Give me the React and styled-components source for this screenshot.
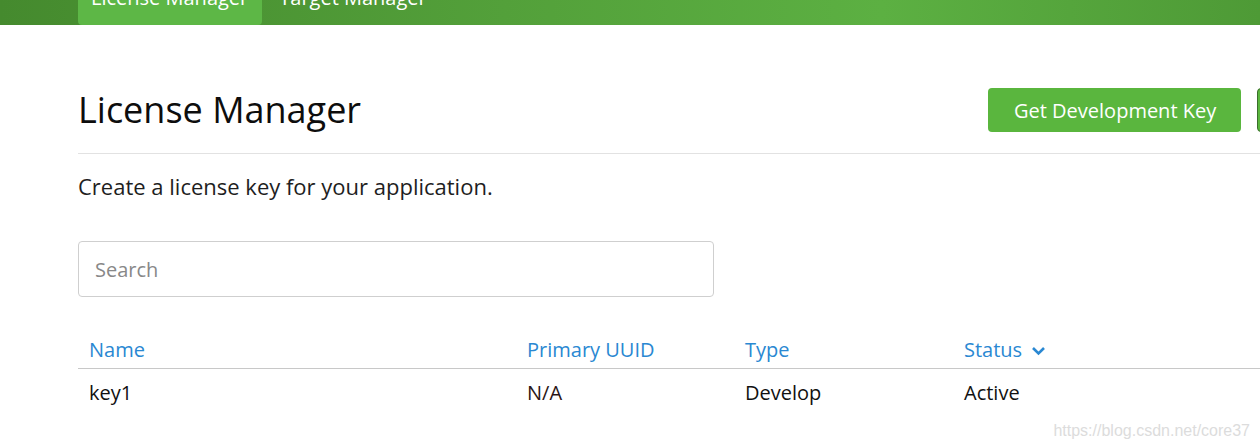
import React from "react";
import styled, { createGlobalStyle } from "styled-components";

const GlobalStyle = createGlobalStyle`
  html, body {
    margin: 0;
    padding: 0;
    background: #ffffff;
    overflow: hidden;
  }
  body {
    font-family: "Open Sans", "Noto Sans", sans-serif;
    color: #1a1a1a;
  }
`;

const Page = styled.div`
  position: relative;
  width: 1260px;
  height: 448px;
  overflow: hidden;
`;

const NavBar = styled.nav`
  display: flex;
  gap: 4px;
  height: 52px;
  margin-top: -27px;
  padding-left: 78px;
  background: linear-gradient(to right, #458a2e 0%, #53a03a 40%, #5cb042 70%, #4e9a36 100%);
`;

const NavTab = styled.a`
  display: block;
  padding: 0 14px 0 13px;
  line-height: 50px;
  font-size: 20px;
  color: #ffffff;
  text-decoration: none;
  border-radius: 0 0 4px 4px;
  background: ${(p) => (p.$active ? "#5db746" : "transparent")};
`;

const Content = styled.main`
  width: 1400px;
  padding-left: 78px;
`;

const Header = styled.header`
  display: flex;
  align-items: center;
  justify-content: space-between;
  margin-top: 63px;
  padding-bottom: 21px;
  border-bottom: 1px solid #e2e2e2;
`;

const Title = styled.h1`
  margin: 0;
  font-size: 36px;
  font-weight: 400;
  line-height: 44px;
  color: #0d0d0d;
`;

const Actions = styled.div`
  display: flex;
  gap: 16px;
  width: 490px;
`;

const Button = styled.button`
  flex-shrink: 0;
  height: 44px;
  padding: 0 25px 0 26px;
  font-family: inherit;
  font-size: 20px;
  color: #ffffff;
  background: #5ab63e;
  border: ${(p) => (p.$outlined ? "1px solid #3b6e2c" : "none")};
  border-radius: 4px;
`;

const Description = styled.p`
  margin: 18px 0 0;
  font-size: 22px;
  line-height: 28px;
  color: #1e1e1e;
`;

const SearchInput = styled.input`
  display: block;
  box-sizing: border-box;
  width: 636px;
  height: 56px;
  margin-top: 41px;
  padding: 0 16px;
  font-family: inherit;
  font-size: 20px;
  color: #222222;
  border: 1px solid #cfcfcf;
  border-radius: 4px;
  outline: none;

  &::placeholder {
    color: #888888;
  }
`;

const Table = styled.table`
  width: 100%;
  margin-top: 35px;
  border-collapse: collapse;
  table-layout: fixed;
`;

const HeadCell = styled.th`
  padding: 4px 11px;
  font-size: 20px;
  font-weight: 400;
  line-height: 28px;
  text-align: left;
  color: #2a88d2;
  border-bottom: 1px solid #c8c8c8;
`;

const Cell = styled.td`
  padding: 10px 11px;
  font-size: 20px;
  line-height: 28px;
  color: ${(p) => (p.$muted ? "#2b1515" : "#111111")};
`;

const SortIcon = styled.svg`
  width: 15px;
  height: 10px;
  margin-left: 9px;
  vertical-align: 1px;
`;

const Watermark = styled.span`
  position: absolute;
  right: 10px;
  bottom: 8px;
  font-family: "Liberation Sans", Arial, sans-serif;
  font-size: 16px;
  color: #dcdcdc;
`;

const columns = [
  { label: "Name", width: 438 },
  { label: "Primary UUID", width: 218 },
  { label: "Type", width: 219 },
  { label: "Status", sort: true },
];

export default function App() {
  return (
    <Page>
      <GlobalStyle />
      <NavBar>
        <NavTab $active>License Manager</NavTab>
        <NavTab>Target Manager</NavTab>
      </NavBar>
      <Content>
        <Header>
          <Title>License Manager</Title>
          <Actions>
            <Button>Get Development Key</Button>
            <Button $outlined>Add License Key</Button>
          </Actions>
        </Header>
        <Description>Create a license key for your application.</Description>
        <SearchInput placeholder="Search" />
        <Table>
          <colgroup>
            {columns.map((c) => (
              <col key={c.label} style={c.width ? { width: c.width } : undefined} />
            ))}
          </colgroup>
          <thead>
            <tr>
              {columns.map((c) => (
                <HeadCell key={c.label}>
                  {c.label}
                  {c.sort && (
                    <SortIcon viewBox="0 0 15 10">
                      <path d="M2 2 L7.5 7.5 L13 2" fill="none" stroke="#2a88d2" strokeWidth="2.6" />
                    </SortIcon>
                  )}
                </HeadCell>
              ))}
            </tr>
          </thead>
          <tbody>
            <tr>
              <Cell>key1</Cell>
              <Cell $muted>N/A</Cell>
              <Cell>Develop</Cell>
              <Cell>Active</Cell>
            </tr>
          </tbody>
        </Table>
      </Content>
      <Watermark>https://blog.csdn.net/core37</Watermark>
    </Page>
  );
}
